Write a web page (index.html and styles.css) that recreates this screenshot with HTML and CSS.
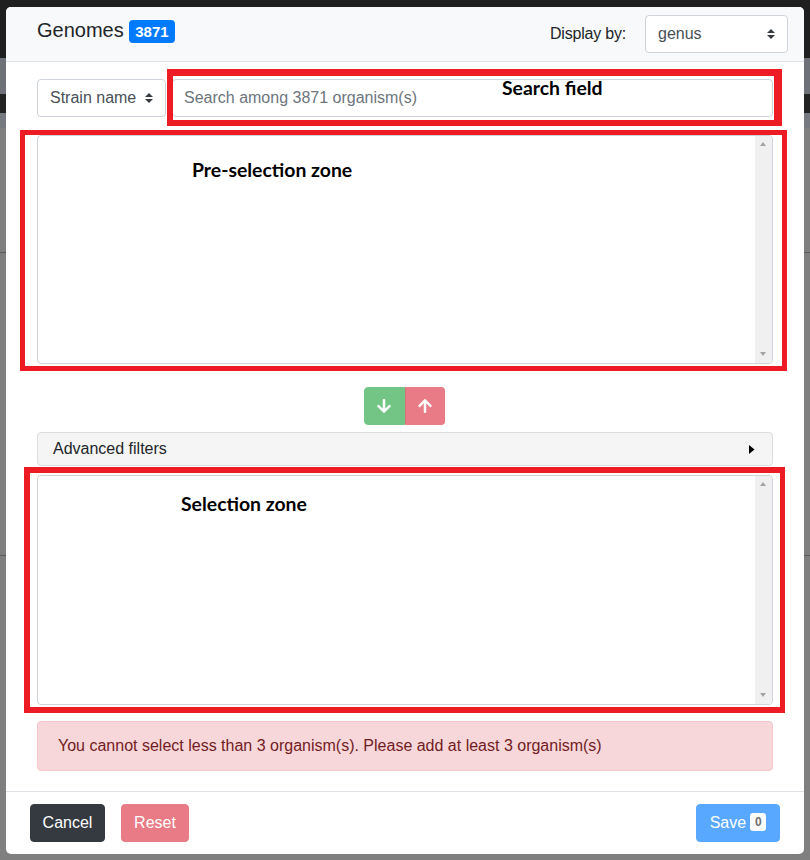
FILE: index.html
```html
<!DOCTYPE html>
<html lang="en">
<head>
<meta charset="utf-8">
<title>Genomes</title>
<link rel="stylesheet" href="styles.css">
</head>
<body>
<div class="modal">
  <div class="modal-header">
    <h5 class="title">Genomes <span class="badge badge-primary">3871</span></h5>
    <div class="display">
      <span class="display-label">Display by:</span>
      <div class="select select-display">
        <span>genus</span>
        <svg class="select-arrows" width="8" height="10" viewBox="0 0 4 5"><path d="M2 0L0 2h4zm0 5L0 3h4z" fill="#343a40"/></svg>
      </div>
    </div>
  </div>

  <div class="modal-body">
    <div class="search-row">
      <div class="select select-strain">
        <span>Strain name</span>
        <svg class="select-arrows" width="8" height="10" viewBox="0 0 4 5"><path d="M2 0L0 2h4zm0 5L0 3h4z" fill="#343a40"/></svg>
      </div>
      <input class="search-input" type="text" placeholder="Search among 3871 organism(s)">
    </div>

    <div class="listbox listbox-pre">
      <div class="list-content"></div>
      <div class="scrollbar">
        <span class="sb-up"></span>
        <span class="sb-down"></span>
      </div>
    </div>

    <div class="transfer">
      <div class="btn-group">
        <button class="btn btn-success disabled" type="button">
          <svg width="14" height="16" viewBox="0 0 448 512"><path fill="#fff" d="M413.1 222.5l22.2 22.2c9.4 9.4 9.4 24.6 0 33.9L241 473c-9.4 9.4-24.6 9.4-33.9 0L12.7 278.6c-9.4-9.4-9.4-24.6 0-33.9l22.2-22.2c9.5-9.5 25-9.3 34.3.4L184 343.4V56c0-13.3 10.7-24 24-24h32c13.3 0 24 10.7 24 24v287.4l114.8-120.5c9.3-9.800 24.8-10 34.3-.4z"/></svg>
        </button>
        <button class="btn btn-danger disabled btn-up" type="button">
          <svg width="14" height="16" viewBox="0 0 448 512"><path fill="#fff" d="M34.9 289.5l-22.2-22.2c-9.4-9.4-9.4-24.6 0-33.9L207 39c9.4-9.4 24.6-9.4 33.9 0l194.3 194.3c9.4 9.4 9.4 24.6 0 33.9L413 289.4c-9.5 9.5-25 9.3-34.3-.4L264 168.6V456c0 13.3-10.7 24-24 24h-32c-13.3 0-24-10.7-24-24V168.6L69.2 289.1c-9.3 9.8-24.8 10-34.3.4z"/></svg>
        </button>
      </div>
    </div>

    <div class="filters">
      <span>Advanced filters</span>
      <svg class="caret" width="6" height="9" viewBox="0 0 6 9"><path d="M0 0L5.5 4.5L0 9z" fill="#000"/></svg>
    </div>

    <div class="listbox listbox-sel">
      <div class="list-content"></div>
      <div class="scrollbar">
        <span class="sb-up"></span>
        <span class="sb-down"></span>
      </div>
    </div>

    <div class="alert">You cannot select less than 3 organism(s). Please add at least 3 organism(s)</div>
  </div>

  <div class="modal-footer">
    <div class="footer-left">
      <button class="btn btn-dark btn-cancel" type="button">Cancel</button>
      <button class="btn btn-danger disabled btn-reset" type="button">Reset</button>
    </div>
    <button class="btn btn-primary disabled btn-save" type="button">Save <span class="badge badge-light">0</span></button>
  </div>

  <div class="annot annot-search"></div>
  <div class="annot annot-pre"></div>
  <div class="annot annot-sel"></div>
  <div class="annot-label label-search">Search field</div>
  <div class="annot-label label-pre">Pre-selection zone</div>
  <div class="annot-label label-sel">Selection zone</div>
</div>
</body>
</html>
```

FILE: styles.css
```css
* {
  box-sizing: border-box;
}

html, body {
  margin: 0;
  padding: 0;
}

body {
  width: 810px;
  height: 860px;
  overflow: hidden;
  font-family: "Liberation Sans", Arial, sans-serif;
  font-size: 16px;
  color: #212529;
  background: linear-gradient(to bottom,
    #1f1f1f 0, #1f1f1f 58px,
    #6e7178 58px, #6e7178 94px,
    #222222 94px, #222222 113px,
    #767980 113px, #767980 128px,
    #7f7f7f 128px, #7f7f7f 252px,
    #5a5a5a 252px, #5a5a5a 253px,
    #7f7f7f 253px, #7f7f7f 555px,
    #5a5a5a 555px, #5a5a5a 556px,
    #7f7f7f 556px);
  padding-top: 7px;
}

.modal {
  position: relative;
  margin: 0 6px;
  width: 798px;
  background: #fff;
  border-radius: 5px;
}

/* header */
.modal-header {
  display: flex;
  align-items: flex-start;
  justify-content: space-between;
  padding: 8px 16px 8px 31px;
  background: #f8f9fa;
  border-bottom: 1px solid #dee2e6;
  border-radius: 5px 5px 0 0;
  height: 55px;
}

.title {
  margin: 3px 0 0;
  font-size: 20px;
  font-weight: 400;
  line-height: 24px;
  color: #212529;
}

.badge {
  display: inline-block;
  font-weight: 700;
  line-height: 1;
  text-align: center;
  white-space: nowrap;
  border-radius: 4px;
}

.badge-primary {
  font-size: 15px;
  padding: 3.75px 6px;
  background: #007bff;
  color: #fff;
}

.badge-light {
  font-size: 12px;
  padding: 3px 4.8px;
  background: #f8f9fa;
  color: #212529;
  position: relative;
  top: -1px;
  border-radius: 3px;
}

.display {
  display: flex;
  align-items: center;
}

.display-label {
  margin-right: 19px;
  color: #212529;
  letter-spacing: -0.2px;
}

.select {
  position: relative;
  display: flex;
  align-items: center;
  height: 38px;
  padding: 0 28px 0 12px;
  border: 1px solid #ced4da;
  border-radius: 4px;
  background: #fff;
  color: #495057;
  line-height: 24px;
}

.select-arrows {
  position: absolute;
  right: 12px;
  top: 13px;
}

.select-display {
  width: 143px;
}

/* body */
.modal-body {
  padding: 17px 31px 20px;
}

.search-row {
  display: flex;
  gap: 6px;
}

.select-strain {
  width: 129px;
  flex: none;
}

.search-input {
  flex: 1;
  height: 38px;
  padding: 0 11px;
  border: 1px solid #ced4da;
  border-radius: 4px;
  font-family: "Liberation Sans", Arial, sans-serif;
  font-size: 16px;
  color: #495057;
  outline: none;
}

.search-input::placeholder {
  color: #6c757d;
  opacity: 1;
}

.listbox {
  display: flex;
  border: 1px solid #ced4da;
  border-radius: 4px;
  overflow: hidden;
}

.listbox-pre {
  margin-top: 18px;
  height: 229px;
}

.listbox-sel {
  margin-top: 9px;
  height: 230px;
}

.list-content {
  flex: 1;
}

.scrollbar {
  position: relative;
  width: 17px;
  background: #f0f0f0;
}

.sb-up,
.sb-down {
  position: absolute;
  left: 5px;
  width: 0;
  height: 0;
  border-left: 3.5px solid transparent;
  border-right: 3.5px solid transparent;
}

.sb-up {
  top: 6px;
  border-bottom: 4px solid #a3a3a3;
}

.sb-down {
  bottom: 7px;
  border-top: 4px solid #a3a3a3;
}

.transfer {
  display: flex;
  justify-content: center;
  margin-top: 23px;
}

.btn-group {
  display: flex;
  margin-left: -1px;
}

.btn {
  display: inline-flex;
  align-items: center;
  justify-content: center;
  height: 38px;
  padding: 0 12px;
  border: 1px solid transparent;
  border-radius: 4px;
  font-family: "Liberation Sans", Arial, sans-serif;
  font-size: 16px;
  line-height: 24px;
  color: #fff;
  cursor: pointer;
  white-space: nowrap;
}

.btn.disabled {
  opacity: .65;
}

.btn-group .btn {
  width: 40.5px;
  padding: 0;
}

.btn-group .btn:first-child {
  border-radius: 4px 0 0 4px;
}

.btn-group .btn-up {
  border-radius: 0 4px 4px 0;
  border-left-color: #b52a37;
}

.btn-success {
  background: #28a745;
  border-color: #28a745;
}

.btn-danger {
  background: #dc3545;
  border-color: #dc3545;
}

.btn-dark {
  background: #343a40;
  border-color: #343a40;
}

.btn-primary {
  background: #007bff;
  border-color: #007bff;
  gap: 4px;
}

.btn-cancel {
  width: 75px;
  padding: 0;
}

.btn-reset {
  width: 68px;
  padding: 0;
}

.btn-save {
  width: 84px;
  padding: 0;
}

.filters {
  margin-top: 7px;
  height: 34px;
  display: flex;
  align-items: center;
  justify-content: space-between;
  padding: 0 17px 0 15px;
  background: #f5f5f5;
  border: 1px solid #dddddd;
  border-radius: 4px;
  color: #212529;
}

.alert {
  margin-top: 16px;
  height: 50px;
  padding: 12px 20px;
  line-height: 24px;
  background: #f8d7da;
  border: 1px solid #f5c6cb;
  border-radius: 4px;
  color: #721c24;
}

/* footer */
.modal-footer {
  display: flex;
  align-items: center;
  justify-content: space-between;
  padding: 12px 24px;
  border-top: 1px solid #dee2e6;
}

.footer-left {
  display: flex;
  gap: 16px;
}

/* annotation overlays */
.annot {
  position: absolute;
  border: 6px solid #ed1c24;
  pointer-events: none;
}

.annot-search {
  left: 161px;
  top: 62px;
  width: 615px;
  height: 57px;
  border-width: 7px 8px 6px 6px;
}

.annot-pre {
  left: 14px;
  top: 123px;
  width: 767px;
  height: 241px;
  border-width: 5px;
}

.annot-sel {
  left: 18px;
  top: 460px;
  width: 761px;
  height: 246px;
  border-width: 6px 5px 6px 6px;
}

.annot-label {
  position: absolute;
  font-family: Lato, "Open Sans", sans-serif;
  font-weight: 700;
  font-size: 19.4px;
  line-height: 22px;
  color: #000;
  white-space: nowrap;
}

.label-search {
  left: 496px;
  top: 70px;
}

.label-pre {
  left: 186px;
  top: 152px;
}

.label-sel {
  left: 175px;
  top: 486px;
}
```
